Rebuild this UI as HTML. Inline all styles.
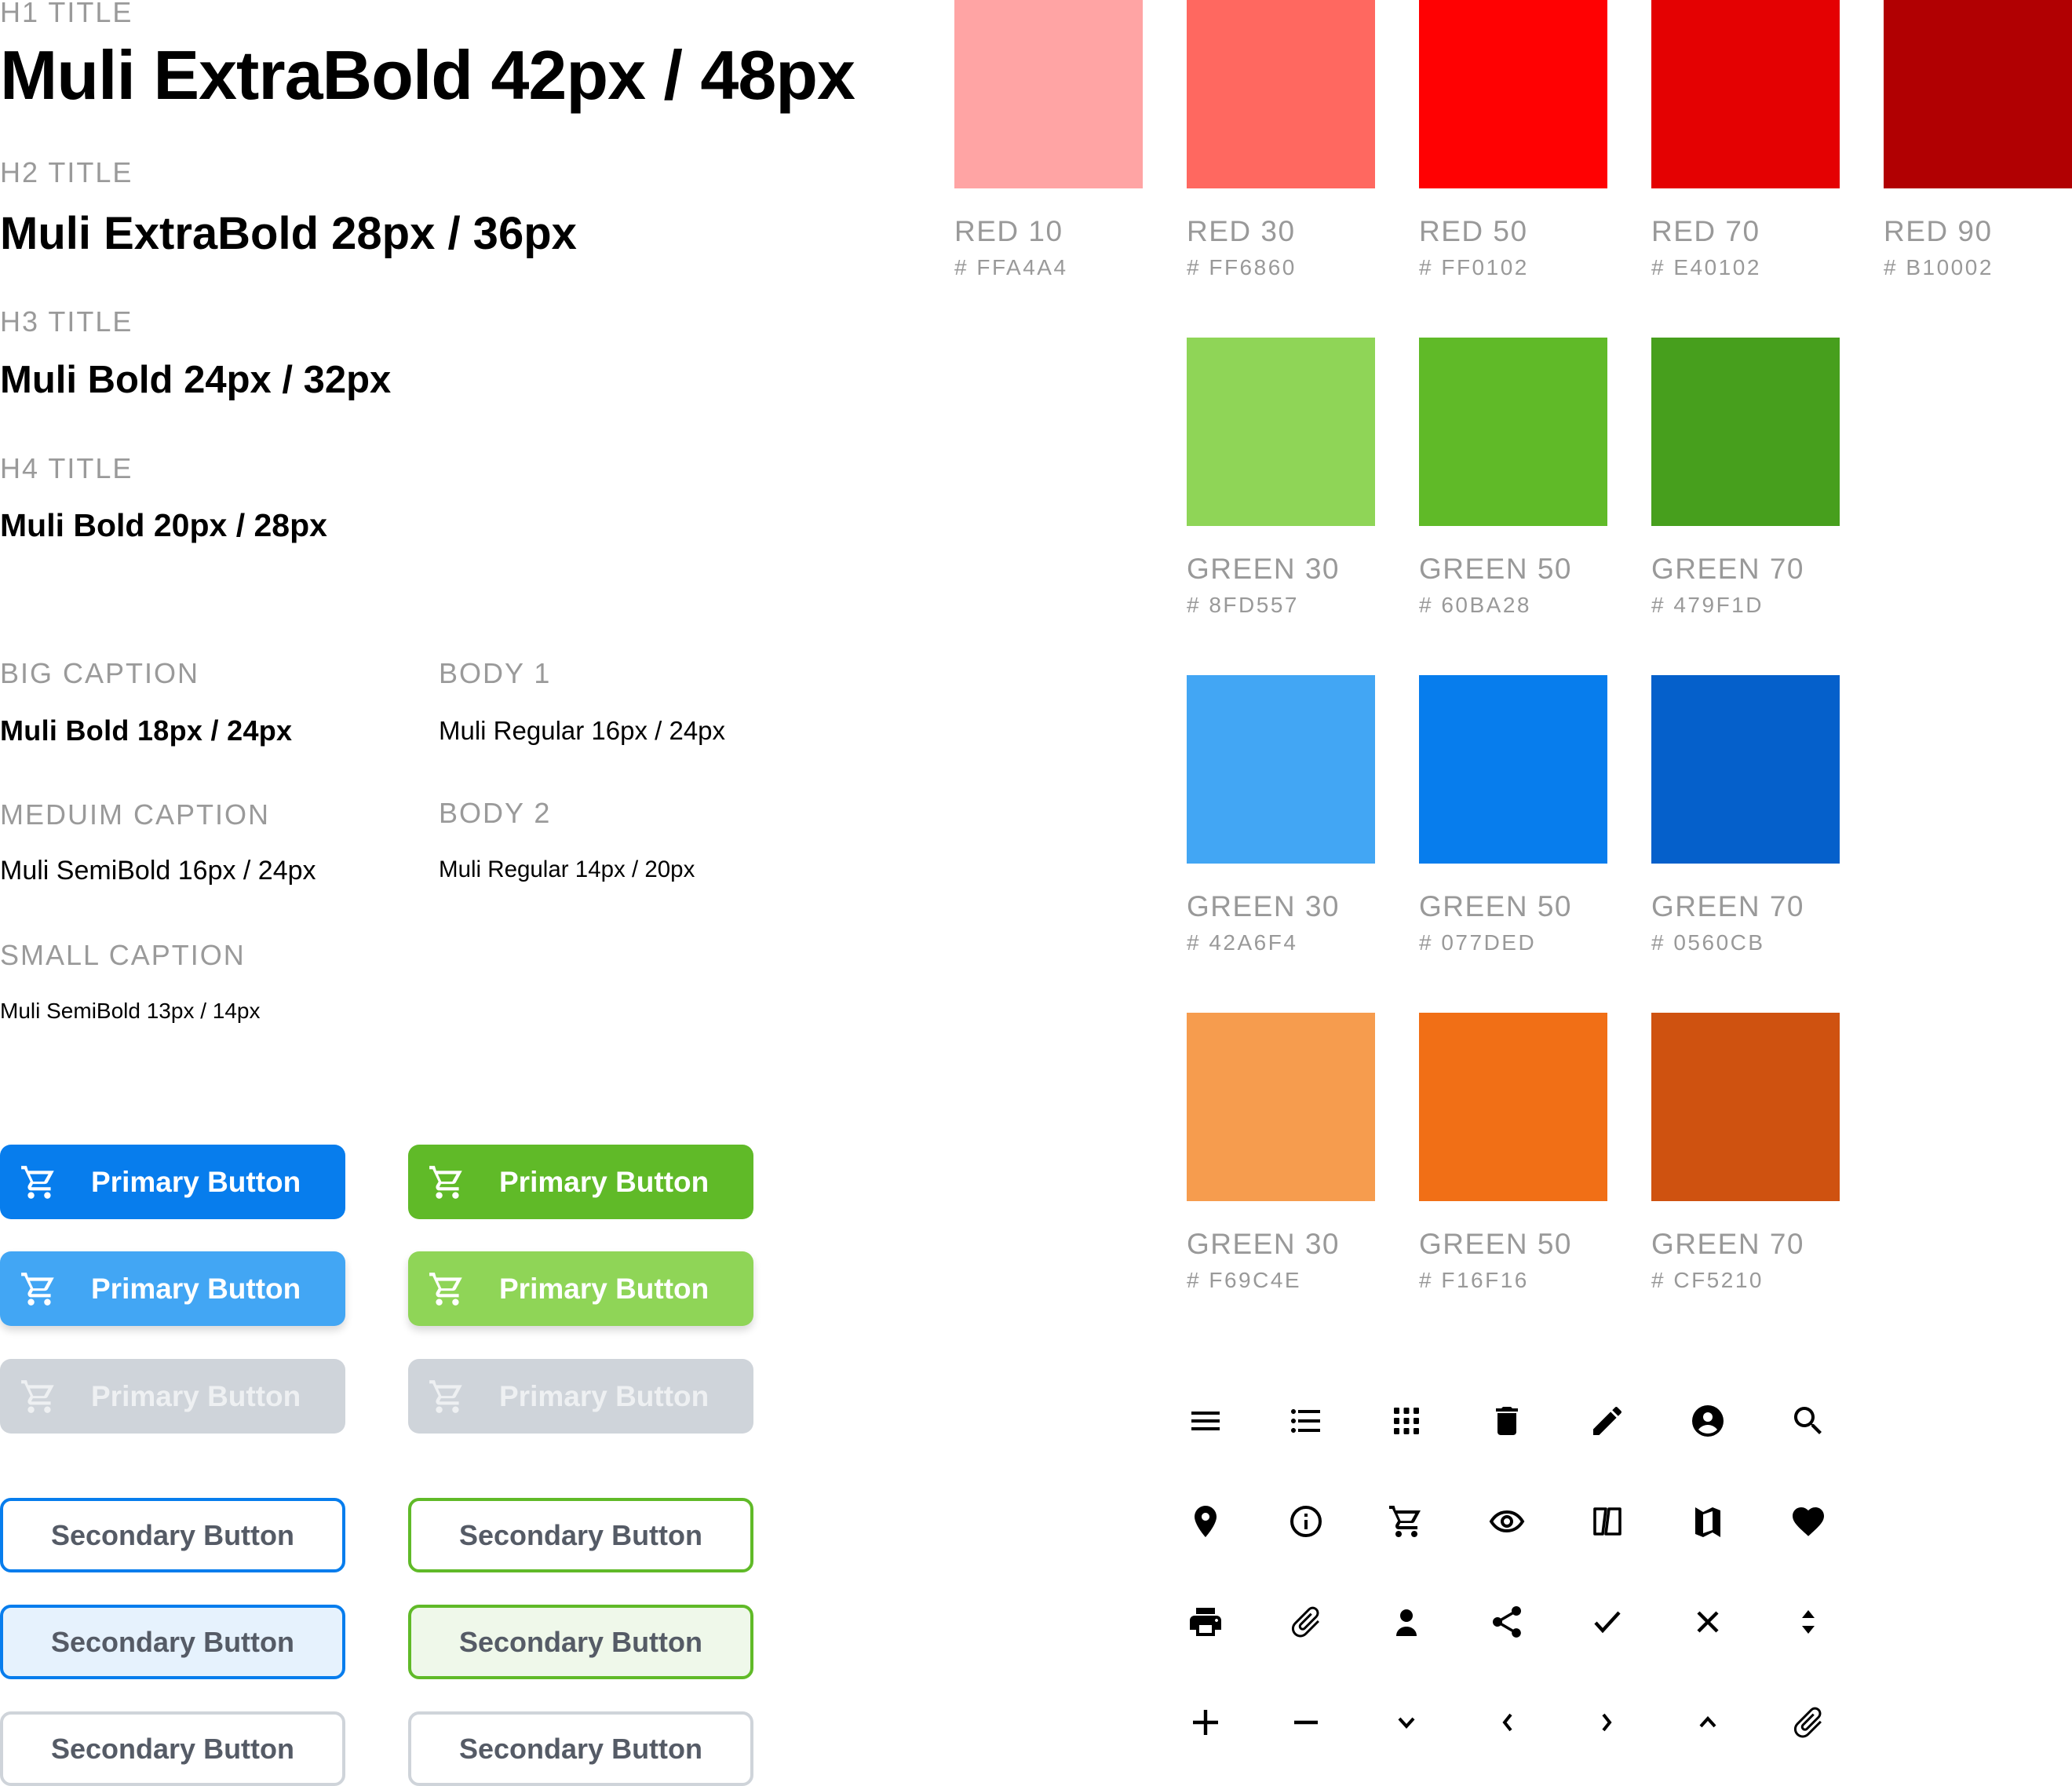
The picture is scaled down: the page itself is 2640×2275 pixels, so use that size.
<!DOCTYPE html>
<html><head><meta charset="utf-8"><style>
*{margin:0;padding:0;box-sizing:border-box}
body{width:2640px;height:2274px;background:#fff;position:relative;overflow:hidden;font-family:"Liberation Sans",sans-serif}
.t{position:absolute;white-space:nowrap;line-height:1}
.cap{color:#9a9a9a;font-size:36px;letter-spacing:2px}
.sw{position:absolute;width:240px;height:240px}
.sl{position:absolute;color:#999;font-size:37px;letter-spacing:1.5px;line-height:1;white-space:nowrap}
.sh{position:absolute;color:#999;font-size:28px;letter-spacing:2.5px;line-height:1;white-space:nowrap}
.btn{position:absolute;width:440px;height:95px;border-radius:14px;font-size:37px;font-weight:bold;color:#fff;line-height:95px}
.btn svg{position:absolute;left:25px;top:23px;width:50px;height:50px}
.btn span{position:absolute;left:116px}
.sec{position:absolute;width:440px;height:95px;border-radius:14px;border:4px solid;font-size:36px;color:#555b66;text-align:center;line-height:87px;font-weight:bold}
.ic{position:absolute;width:48px;height:48px}
</style></head><body>

<div class="t cap" style="left:0;top:-2px">H1 TITLE</div>
<div class="t" style="left:0;top:52px;font-size:88px;font-weight:bold;letter-spacing:-1px">Muli ExtraBold 42px / 48px</div>
<div class="t cap" style="left:0;top:202px">H2 TITLE</div>
<div class="t" style="left:0;top:269px;font-size:58px;font-weight:bold;letter-spacing:0px">Muli ExtraBold 28px / 36px</div>
<div class="t cap" style="left:0;top:392px">H3 TITLE</div>
<div class="t" style="left:0;top:460px;font-size:49px;font-weight:bold;letter-spacing:0px">Muli Bold 24px / 32px</div>
<div class="t cap" style="left:0;top:579px">H4 TITLE</div>
<div class="t" style="left:0;top:649px;font-size:41px;font-weight:bold;letter-spacing:0px">Muli Bold 20px / 28px</div>

<div class="t cap" style="left:0;top:840px">BIG CAPTION</div>
<div class="t cap" style="left:559px;top:840px">BODY 1</div>
<div class="t" style="left:0;top:913px;font-size:36px;font-weight:bold;letter-spacing:0.3px">Muli Bold 18px / 24px</div>
<div class="t" style="left:559px;top:914px;font-size:33px">Muli Regular 16px / 24px</div>
<div class="t cap" style="left:0;top:1020px">MEDUIM CAPTION</div>
<div class="t cap" style="left:559px;top:1018px">BODY 2</div>
<div class="t" style="left:0;top:1092px;font-size:34px">Muli SemiBold 16px / 24px</div>
<div class="t" style="left:559px;top:1093px;font-size:29.5px">Muli Regular 14px / 20px</div>
<div class="t cap" style="left:0;top:1199px">SMALL CAPTION</div>
<div class="t" style="left:0;top:1274px;font-size:28px">Muli SemiBold 13px / 14px</div>

<div class="sw" style="left:1216px;top:0;background:#FFA4A4"></div>
<div class="sw" style="left:1512px;top:0;background:#FF6860"></div>
<div class="sw" style="left:1808px;top:0;background:#FF0102"></div>
<div class="sw" style="left:2104px;top:0;background:#E40102"></div>
<div class="sw" style="left:2400px;top:0;background:#B10002"></div>
<div class="sl" style="left:1216px;top:276px">RED 10</div><div class="sh" style="left:1216px;top:327px"># FFA4A4</div>
<div class="sl" style="left:1512px;top:276px">RED 30</div><div class="sh" style="left:1512px;top:327px"># FF6860</div>
<div class="sl" style="left:1808px;top:276px">RED 50</div><div class="sh" style="left:1808px;top:327px"># FF0102</div>
<div class="sl" style="left:2104px;top:276px">RED 70</div><div class="sh" style="left:2104px;top:327px"># E40102</div>
<div class="sl" style="left:2400px;top:276px">RED 90</div><div class="sh" style="left:2400px;top:327px"># B10002</div>

<div class="sw" style="left:1512px;top:430px;background:#8FD557"></div>
<div class="sw" style="left:1808px;top:430px;background:#60BA28"></div>
<div class="sw" style="left:2104px;top:430px;background:#479F1D"></div>
<div class="sl" style="left:1512px;top:706px">GREEN 30</div><div class="sh" style="left:1512px;top:757px"># 8FD557</div>
<div class="sl" style="left:1808px;top:706px">GREEN 50</div><div class="sh" style="left:1808px;top:757px"># 60BA28</div>
<div class="sl" style="left:2104px;top:706px">GREEN 70</div><div class="sh" style="left:2104px;top:757px"># 479F1D</div>

<div class="sw" style="left:1512px;top:860px;background:#42A6F4"></div>
<div class="sw" style="left:1808px;top:860px;background:#077DED"></div>
<div class="sw" style="left:2104px;top:860px;background:#0560CB"></div>
<div class="sl" style="left:1512px;top:1136px">GREEN 30</div><div class="sh" style="left:1512px;top:1187px"># 42A6F4</div>
<div class="sl" style="left:1808px;top:1136px">GREEN 50</div><div class="sh" style="left:1808px;top:1187px"># 077DED</div>
<div class="sl" style="left:2104px;top:1136px">GREEN 70</div><div class="sh" style="left:2104px;top:1187px"># 0560CB</div>

<div class="sw" style="left:1512px;top:1290px;background:#F69C4E"></div>
<div class="sw" style="left:1808px;top:1290px;background:#F16F16"></div>
<div class="sw" style="left:2104px;top:1290px;background:#CF5210"></div>
<div class="sl" style="left:1512px;top:1566px">GREEN 30</div><div class="sh" style="left:1512px;top:1617px"># F69C4E</div>
<div class="sl" style="left:1808px;top:1566px">GREEN 50</div><div class="sh" style="left:1808px;top:1617px"># F16F16</div>
<div class="sl" style="left:2104px;top:1566px">GREEN 70</div><div class="sh" style="left:2104px;top:1617px"># CF5210</div>

<svg width="0" height="0" style="position:absolute"><defs>
<symbol id="cart" viewBox="0 0 24 24"><path fill="currentColor" d="M7 18c-1.1 0-2 .9-2 2s.9 2 2 2 2-.9 2-2-.9-2-2-2zm10 0c-1.1 0-2 .9-2 2s.9 2 2 2 2-.9 2-2-.9-2-2-2zM1 2v2h2l3.6 7.6-1.4 2.4c-.1.3-.2.6-.2 1 0 1.1.9 2 2 2h12v-2H7.4c-.1 0-.2-.1-.2-.2v-.1l.9-1.7h7.4c.8 0 1.4-.4 1.7-1L21 5H5.2l-.9-3H1zm5.2 5h11.4l-2.6 4.6H8.3L6.2 7z"/></symbol>
<symbol id="clip" viewBox="0 0 24 24"><g transform="rotate(45 12 12)"><path d="M16.5 6v11.5c0 2.21-1.79 4-4 4s-4-1.79-4-4V5c0-1.38 1.12-2.5 2.5-2.5s2.5 1.12 2.5 2.5v10.5c0 .55-.45 1-1 1s-1-.45-1-1V6H10v9.5c0 1.38 1.12 2.5 2.5 2.5s2.5-1.12 2.5-2.5V5c0-2.21-1.790-4-4-4S7 2.79 7 5v12.5c0 3.04 2.46 5.5 5.5 5.5s5.5-2.46 5.5-5.5V6h-1.5z"/></g></symbol>
</defs></svg>

<div class="btn" style="left:0;top:1458px;background:#077DED"><svg><use href="#cart"/></svg><span>Primary Button</span></div>
<div class="btn" style="left:520px;top:1458px;background:#60BA28"><svg><use href="#cart"/></svg><span>Primary Button</span></div>
<div class="btn" style="left:0;top:1594px;background:#42A6F4;box-shadow:0 6px 10px rgba(0,0,0,.15)"><svg><use href="#cart"/></svg><span>Primary Button</span></div>
<div class="btn" style="left:520px;top:1594px;background:#8FD557;box-shadow:0 6px 10px rgba(0,0,0,.15)"><svg><use href="#cart"/></svg><span>Primary Button</span></div>
<div class="btn" style="left:0;top:1731px;background:#CFD4DA;color:#eef0f2"><svg><use href="#cart"/></svg><span>Primary Button</span></div>
<div class="btn" style="left:520px;top:1731px;background:#CFD4DA;color:#eef0f2"><svg><use href="#cart"/></svg><span>Primary Button</span></div>

<div class="sec" style="left:0;top:1908px;border-color:#077DED;background:#fff">Secondary Button</div>
<div class="sec" style="left:520px;top:1908px;border-color:#60BA28;background:#fff">Secondary Button</div>
<div class="sec" style="left:0;top:2044px;border-color:#077DED;background:#E6F2FD">Secondary Button</div>
<div class="sec" style="left:520px;top:2044px;border-color:#60BA28;background:#EFF8EA">Secondary Button</div>
<div class="sec" style="left:0;top:2180px;border-color:#CFD4DA;background:#fff">Secondary Button</div>
<div class="sec" style="left:520px;top:2180px;border-color:#CFD4DA;background:#fff">Secondary Button</div>

<svg class="ic" style="left:1512px;top:1786px" viewBox="0 0 24 24"><path d="M3 18h18v-2H3v2zm0-5h18v-2H3v2zm0-7v2h18V6H3z"/></svg>
<svg class="ic" style="left:1640px;top:1786px" viewBox="0 0 24 24"><path d="M4 10.5c-.83 0-1.5.67-1.5 1.5s.67 1.5 1.5 1.5 1.5-.67 1.5-1.5-.67-1.5-1.5-1.5zm0-6c-.83 0-1.5.67-1.5 1.5S3.17 7.5 4 7.5 5.5 6.83 5.5 6 4.83 4.5 4 4.5zm0 12c-.83 0-1.5.68-1.5 1.5s.68 1.5 1.5 1.5 1.5-.68 1.5-1.5-.67-1.5-1.5-1.5zM7 19h14v-2H7v2zm0-6h14v-2H7v2zm0-8v2h14V5H7z"/></svg>
<svg class="ic" style="left:1768px;top:1786px" viewBox="0 0 24 24"><g><rect x="4" y="3.5" width="3.5" height="4" rx=".6"/><rect x="10.25" y="3.5" width="3.5" height="4" rx=".6"/><rect x="16.5" y="3.5" width="3.5" height="4" rx=".6"/><rect x="4" y="10" width="3.5" height="4" rx=".6"/><rect x="10.25" y="10" width="3.5" height="4" rx=".6"/><rect x="16.5" y="10" width="3.5" height="4" rx=".6"/><rect x="4" y="16.5" width="3.5" height="4" rx=".6"/><rect x="10.25" y="16.5" width="3.5" height="4" rx=".6"/><rect x="16.5" y="16.5" width="3.5" height="4" rx=".6"/></g></svg>
<svg class="ic" style="left:1896px;top:1786px" viewBox="0 0 24 24"><path d="M6 19c0 1.1.9 2 2 2h8c1.1 0 2-.9 2-2V7H6v12zM19 4h-3.5l-1-1h-5l-1 1H5v2h14V4z"/></svg>
<svg class="ic" style="left:2024px;top:1786px" viewBox="0 0 24 24"><path d="M3 17.25V21h3.75L17.81 9.94l-3.75-3.75L3 17.25zM20.71 7.04c.39-.39.39-1.02 0-1.41l-2.34-2.340c-.39-.39-1.02-.39-1.41 0l-1.83 1.83 3.75 3.75 1.83-1.83z"/></svg>
<svg class="ic" style="left:2152px;top:1786px" viewBox="0 0 24 24"><circle cx="12" cy="12" r="10"/><circle cx="12" cy="9.5" r="3" fill="#fff"/><path d="M6 17.5c1.5-2 3.8-3 6-3s4.5 1 6 3c-1.6 1.6-3.7 2.5-6 2.5s-4.4-.9-6-2.5z" fill="#fff"/></svg>
<svg class="ic" style="left:2280px;top:1786px" viewBox="0 0 24 24"><path d="M15.5 14h-.79l-.28-.27C15.41 12.59 16 11.11 16 9.5 16 5.91 13.09 3 9.5 3S3 5.91 3 9.5 5.91 16 9.5 16c1.61 0 3.09-.59 4.23-1.57l.27.28v.79l5 4.99L20.49 19l-4.99-5zm-6 0C7.01 14 5 11.99 5 9.5S7.01 5 9.5 5 14 7.01 14 9.5 11.99 14 9.5 14z"/></svg>

<svg class="ic" style="left:1512px;top:1914px" viewBox="0 0 24 24"><path d="M12 2C8.13 2 5 5.13 5 9c0 5.25 7 13 7 13s7-7.75 7-13c0-3.87-3.13-7-7-7zm0 9.5c-1.38 0-2.5-1.12-2.5-2.5s1.12-2.5 2.5-2.5 2.5 1.12 2.5 2.5-1.12 2.5-2.5 2.5z"/></svg>
<svg class="ic" style="left:1640px;top:1914px" viewBox="0 0 24 24"><circle cx="12" cy="12" r="9" fill="none" stroke="#000" stroke-width="2"/><rect x="11" y="11" width="2" height="6"/><rect x="11" y="7" width="2" height="2"/></svg>
<svg class="ic" style="left:1768px;top:1914px" viewBox="0 0 24 24"><use href="#cart"/></svg>
<svg class="ic" style="left:1896px;top:1914px" viewBox="0 0 24 24"><path d="M2 12c2.5-4 6-6 10-6s7.5 2 10 6c-2.5 4-6 6-10 6s-7.5-2-10-6z" fill="none" stroke="#000" stroke-width="2"/><circle cx="12" cy="12" r="3" fill="none" stroke="#000" stroke-width="2"/></svg>
<svg class="ic" style="left:2024px;top:1914px" viewBox="0 0 24 24"><path d="M13 4h7v16h-9z" fill="none" stroke="#000" stroke-width="1.8" stroke-linejoin="round"/><path d="M4 4h7L9 20H4z" fill="none" stroke="#000" stroke-width="1.8" stroke-linejoin="round"/></svg>
<svg class="ic" style="left:2152px;top:1914px" viewBox="0 0 24 24"><path d="M4 3l5 3 6-3 5 2v17l-5-3-6 3-5-2z"/><path d="M9 7.5l6-2v12l-6 2z" fill="#fff"/></svg>
<svg class="ic" style="left:2280px;top:1914px" viewBox="0 0 24 24"><path d="M12 21.35l-1.45-1.32C5.4 15.36 2 12.28 2 8.5 2 5.42 4.42 3 7.5 3c1.74 0 3.41.81 4.5 2.09C13.09 3.81 14.76 3 16.5 3 19.58 3 22 5.42 22 8.5c0 3.78-3.4 6.86-8.55 11.54L12 21.35z"/></svg>

<svg class="ic" style="left:1512px;top:2042px" viewBox="0 0 24 24"><path d="M19 8H5c-1.66 0-3 1.34-3 3v6h4v4h12v-4h4v-6c0-1.66-1.34-3-3-3zm-3 11H8v-5h8v5zm3-7c-.55 0-1-.45-1-1s.45-1 1-1 1 .45 1 1-.45 1-1 1zm-1-9H6v4h12V3z"/></svg>
<svg class="ic" style="left:1640px;top:2042px" viewBox="0 0 24 24"><use href="#clip"/></svg>
<svg class="ic" style="left:1768px;top:2042px" viewBox="0 0 24 24"><circle cx="12" cy="8" r="4"/><path d="M5.5 21c0-3.5 2.8-6 6.5-6s6.5 2.5 6.5 6z"/></svg>
<svg class="ic" style="left:1896px;top:2042px" viewBox="0 0 24 24"><path d="M18 16.08c-.76 0-1.44.3-1.96.77L8.91 12.7c.05-.23.09-.46.09-.7s-.04-.47-.09-.7l7.05-4.11c.54.5 1.25.81 2.04.81 1.66 0 3-1.34 3-3s-1.34-3-3-3-3 1.34-3 3c0 .24.04.47.09.7L8.04 9.81C7.5 9.31 6.79 9 6 9c-1.66 0-3 1.34-3 3s1.34 3 3 3c.79 0 1.5-.31 2.04-.81l7.12 4.16c-.05.21-.08.43-.08.65 0 1.61 1.31 2.92 2.92 2.92 1.61 0 2.92-1.31 2.92-2.92s-1.31-2.92-2.92-2.92z"/></svg>
<svg class="ic" style="left:2024px;top:2042px" viewBox="0 0 24 24"><path d="M4.5 12.5l4.5 5L19.5 6" fill="none" stroke="#000" stroke-width="2.2"/></svg>
<svg class="ic" style="left:2152px;top:2042px" viewBox="0 0 24 24"><path d="M6 6l12 12M18 6L6 18" fill="none" stroke="#000" stroke-width="2.2"/></svg>
<svg class="ic" style="left:2280px;top:2042px" viewBox="0 0 24 24"><path d="M12 4.5l4 5H8zM12 19.5l4-5H8z"/></svg>

<svg class="ic" style="left:1512px;top:2170px" viewBox="0 0 24 24"><path d="M12 4v16M4 12h16" fill="none" stroke="#000" stroke-width="2.2"/></svg>
<svg class="ic" style="left:1640px;top:2170px" viewBox="0 0 24 24"><path d="M4.5 12h15" fill="none" stroke="#000" stroke-width="2.2"/></svg>
<svg class="ic" style="left:1768px;top:2170px" viewBox="0 0 24 24"><path d="M7.5 9.5l4.5 5 4.5-5" fill="none" stroke="#000" stroke-width="2"/></svg>
<svg class="ic" style="left:1896px;top:2170px" viewBox="0 0 24 24"><path d="M14.5 7l-4 5 4 5" fill="none" stroke="#000" stroke-width="2"/></svg>
<svg class="ic" style="left:2024px;top:2170px" viewBox="0 0 24 24"><path d="M9.5 7l4 5-4 5" fill="none" stroke="#000" stroke-width="2"/></svg>
<svg class="ic" style="left:2152px;top:2170px" viewBox="0 0 24 24"><path d="M7.5 14.5l4.5-5 4.5 5" fill="none" stroke="#000" stroke-width="2"/></svg>
<svg class="ic" style="left:2280px;top:2170px" viewBox="0 0 24 24"><use href="#clip"/></svg>
</body></html>
